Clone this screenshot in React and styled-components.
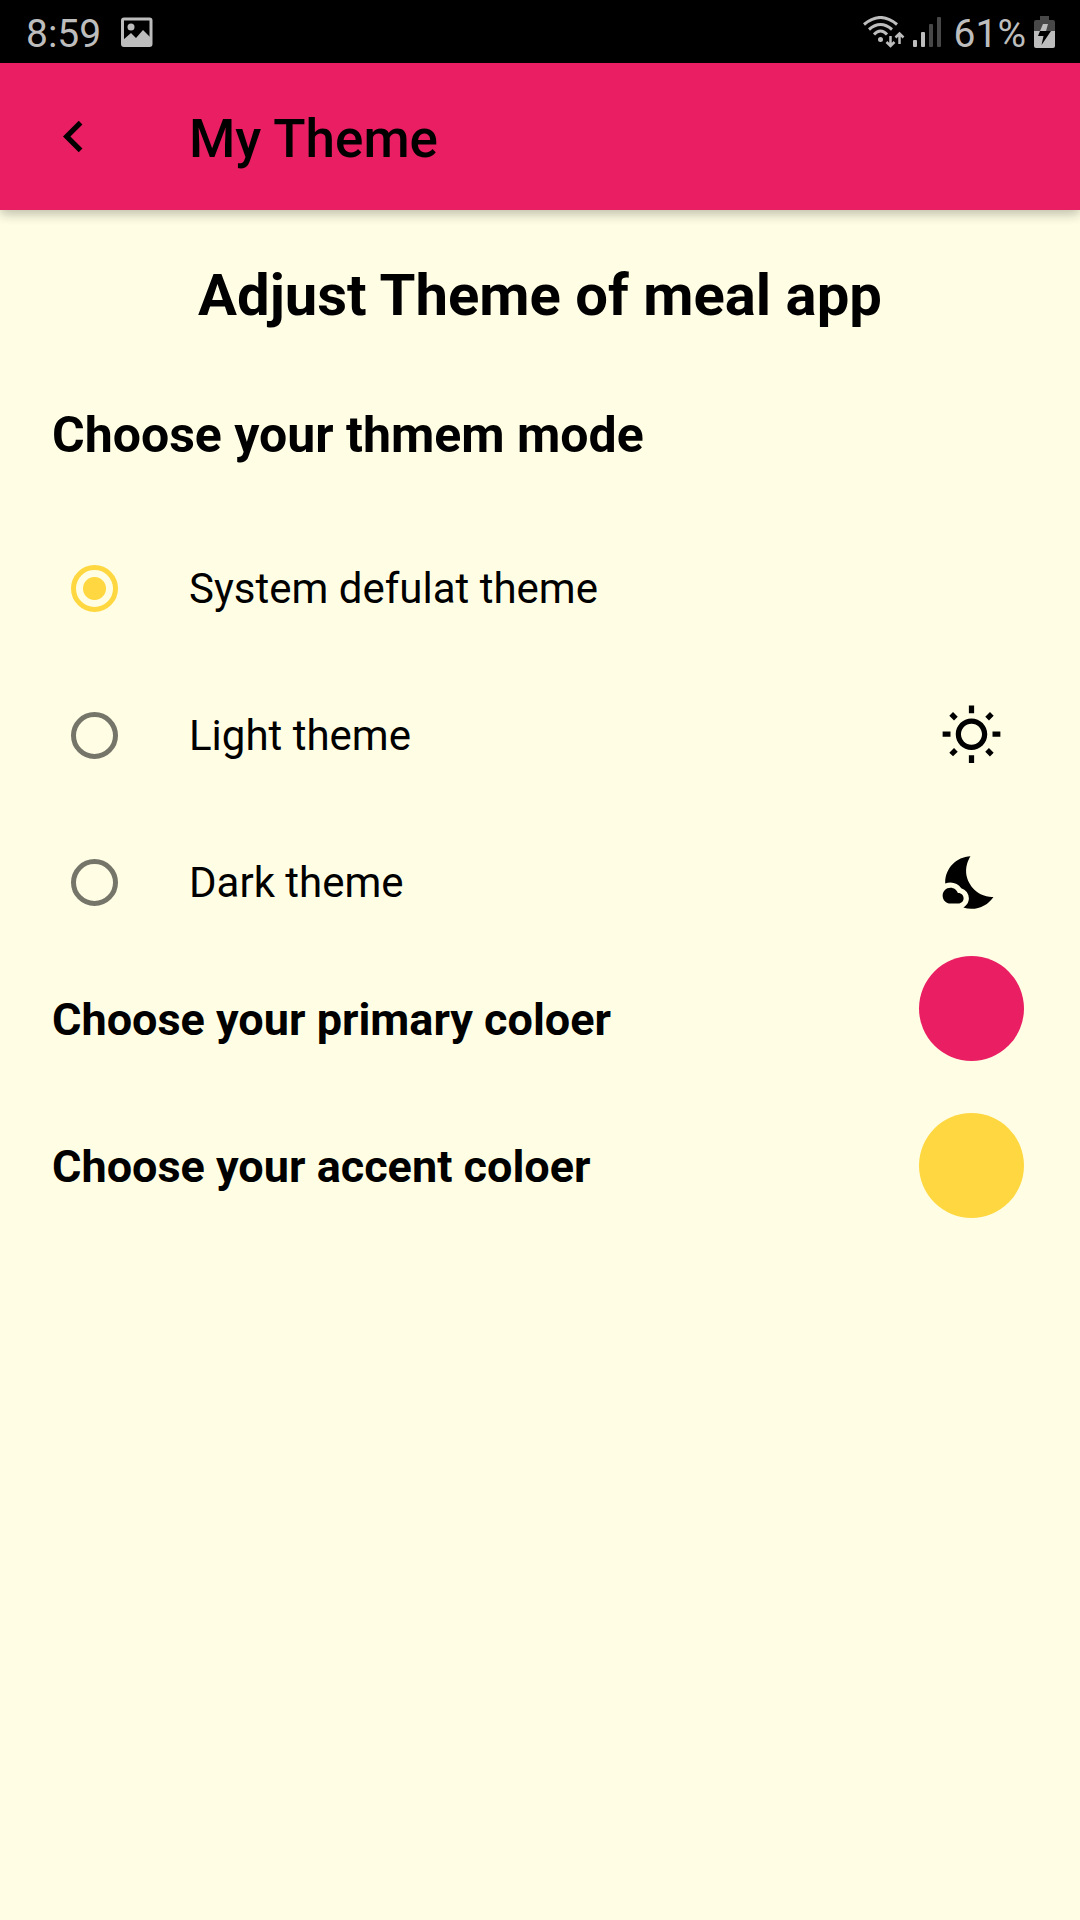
import React, { useState } from "react";
import styled, { createGlobalStyle } from "styled-components";
import { MdChevronLeft, MdNightsStay, MdOutlineWbSunny } from "react-icons/md";

const GlobalStyle = createGlobalStyle`
  *, *::before, *::after { box-sizing: border-box; }
  body {
    margin: 0;
    background: #fffee5;
    color: #000;
    font-family: Roboto, "Liberation Sans", sans-serif;
  }
`;

const Screen = styled.div`
  display: flex;
  flex-direction: column;
  min-height: 100vh;
  background: #fffee5;
`;

const StatusBar = styled.div`
  display: flex;
  justify-content: space-between;
  align-items: center;
  height: 63px;
  padding: 4px 25px 0 26px;
  background: #000;
  color: #bdbdbd;
  font-size: 39px;
  line-height: 46px;
`;

const StatusGroup = styled.div`
  display: flex;
  align-items: center;
  gap: ${(p) => p.$gap}px;
`;

const StatusIcon = styled.svg`
  display: block;
  width: ${(p) => p.$width}px;
  height: 36px;
`;

const AppBar = styled.header`
  display: flex;
  align-items: center;
  gap: 42px;
  height: 147px;
  background: #e91e63;
  box-shadow: 0 5px 10px rgba(0, 0, 0, 0.16), 0 3px 12px rgba(0, 0, 0, 0.1);
`;

const BackButton = styled.button`
  display: flex;
  align-items: center;
  justify-content: center;
  width: 147px;
  height: 147px;
  padding: 0;
  border: 0;
  background: none;
  color: #000;
  font-size: 63px;
`;

const BarTitle = styled.h1`
  margin: 0;
  padding-top: 4px;
  font-size: 53px;
  font-weight: 500;
  line-height: 62px;
`;

const Content = styled.main`
  padding: 51px 0;
`;

const PageHeading = styled.h2`
  margin: 0;
  text-align: center;
  font-size: 58px;
  font-weight: 700;
  line-height: 68px;
`;

const ModeGroup = styled.fieldset`
  margin: 0;
  padding: 0;
  border: 0;
`;

const SectionTitle = styled.legend`
  padding: 77px 52px 50px;
  font-size: 50px;
  font-weight: 700;
  line-height: 59px;
`;

const ModeRow = styled.label`
  display: flex;
  align-items: center;
  gap: 71px;
  height: 147px;
  padding: 0 77px 0 71px;
  font-size: 42px;
  line-height: 50px;
`;

const ModeName = styled.span`
  flex: 1;
`;

const Radio = styled.input`
  appearance: none;
  flex: none;
  width: 47px;
  height: 47px;
  margin: 0;
  border: 5px solid #757569;
  border-radius: 50%;

  &:checked {
    border-color: #ffd740;
    background: radial-gradient(circle, #ffd740 11px, transparent 12px);
  }
`;

const ModeIcon = styled.span`
  display: flex;
  font-size: 63px;
`;

const ColorSection = styled.section`
  display: flex;
  justify-content: space-between;
  align-items: flex-start;
  padding: 0 56px 0 52px;
`;

const ColorLabels = styled.div`
  display: flex;
  flex-direction: column;
  gap: 94px;
  padding-top: 37px;
  font-size: 45px;
  font-weight: 700;
  line-height: 53px;
`;

const Swatches = styled.div`
  display: flex;
  flex-direction: column;
  gap: 52px;
`;

const Swatch = styled.button`
  width: 105px;
  height: 105px;
  padding: 0;
  border: 0;
  border-radius: 50%;
  background: ${(p) => p.$color};
`;

const MODES = [
  { id: "system", name: "System defulat theme" },
  { id: "light", name: "Light theme", Icon: MdOutlineWbSunny },
  { id: "dark", name: "Dark theme", Icon: MdNightsStay },
];

const COLORS = [
  { id: "primary", name: "Choose your primary coloer", color: "#e91e63" },
  { id: "accent", name: "Choose your accent coloer", color: "#ffd740" },
];

const PictureIcon = () => (
  <StatusIcon $width={32} viewBox="0 0 32 36" aria-hidden="true">
    <rect x="1.5" y="3" width="28.500" height="26.500" rx="1.5" fill="none" stroke="#bdbdbd" strokeWidth="3" />
    <circle cx="10" cy="11" r="3.5" fill="#bdbdbd" />
    <path d="M2 24l8-7 5 5 7-8 8 8v8H2z" fill="#bdbdbd" />
  </StatusIcon>
);

const WifiIcon = () => (
  <StatusIcon $width={42} viewBox="0 0 42 36" aria-hidden="true">
    <g fill="none" stroke="#bdbdbd" strokeWidth="3">
      <path d="M1 8.500Q17.500-5.500 34 8.500" />
      <path d="M6 13.500Q17.500 3.500 29 13.500" />
      <path d="M11 18.500Q17.500 11.500 24 18.500" />
      <path d="M27.500 20v10M23.500 26l4 4 4-4M36.500 28V18M32.500 21.500l4-4 4 4" strokeWidth="2.5" />
    </g>
    <circle cx="17.500" cy="23.500" r="2.500" fill="#bdbdbd" />
  </StatusIcon>
);

const SignalIcon = () => (
  <StatusIcon $width={33} viewBox="0 0 33 36" aria-hidden="true">
    <g fill="#bdbdbd">
      <rect x="0" y="24" width="4" height="7" rx="1" />
      <rect x="8" y="16" width="4" height="15" rx="1" />
    </g>
    <g fill="#484848">
      <rect x="16" y="8" width="4" height="23" rx="1" />
      <rect x="24" y="1" width="4" height="30" rx="1" />
    </g>
  </StatusIcon>
);

const BatteryIcon = () => (
  <StatusIcon $width={21} viewBox="0 0 21 36" aria-hidden="true">
    <path d="M6 0h9v4h4a2 2 0 0 1 2 2v9H0V6a2 2 0 0 1 2-2h4z" fill="#484848" />
    <path d="M0 15h21v15a2 2 0 0 1-2 2H2a2 2 0 0 1-2-2z" fill="#bdbdbd" />
    <path d="M9 8h5l-2 7H6z" fill="#bdbdbd" />
    <path d="M6 15h11L7.500 29l2-9H4z" fill="#000" />
  </StatusIcon>
);

export default function App() {
  const [mode, setMode] = useState("system");

  return (
    <>
      <GlobalStyle />
      <Screen>
        <StatusBar>
          <StatusGroup $gap={20}>
            <span>8:59</span>
            <PictureIcon />
          </StatusGroup>
          <StatusGroup $gap={8}>
            <WifiIcon />
            <SignalIcon />
            <span>61%</span>
            <BatteryIcon />
          </StatusGroup>
        </StatusBar>
        <AppBar>
          <BackButton type="button" aria-label="Back">
            <MdChevronLeft />
          </BackButton>
          <BarTitle>My Theme</BarTitle>
        </AppBar>
        <Content>
          <PageHeading>Adjust Theme of meal app</PageHeading>
          <ModeGroup>
            <SectionTitle>Choose your thmem mode</SectionTitle>
            {MODES.map(({ id, name, Icon }) => (
              <ModeRow key={id} htmlFor={id}>
                <Radio
                  type="radio"
                  name="mode"
                  id={id}
                  checked={mode === id}
                  onChange={() => setMode(id)}
                />
                <ModeName>{name}</ModeName>
                {Icon && (
                  <ModeIcon>
                    <Icon />
                  </ModeIcon>
                )}
              </ModeRow>
            ))}
          </ModeGroup>
          <ColorSection>
            <ColorLabels>
              {COLORS.map(({ id, name }) => (
                <label key={id} htmlFor={id}>
                  {name}
                </label>
              ))}
            </ColorLabels>
            <Swatches>
              {COLORS.map(({ id, color }) => (
                <Swatch key={id} id={id} type="button" $color={color} />
              ))}
            </Swatches>
          </ColorSection>
        </Content>
      </Screen>
    </>
  );
}
